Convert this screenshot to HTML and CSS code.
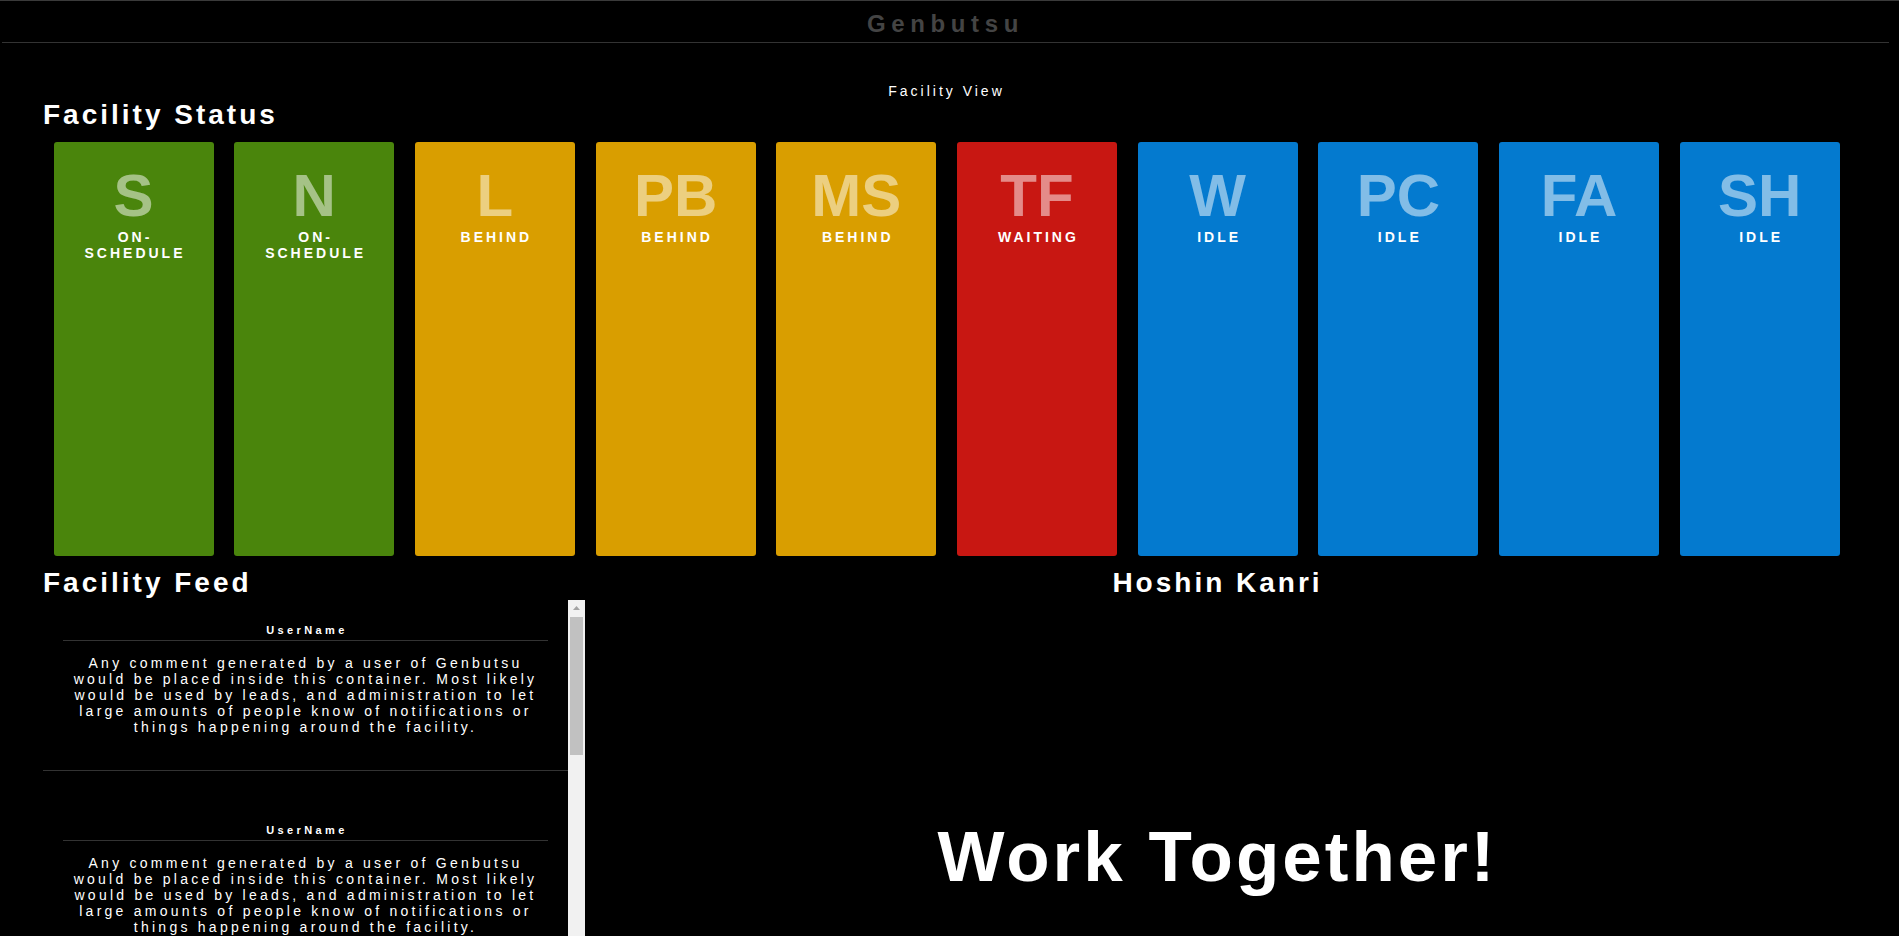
FILE: index.html
```html
<!DOCTYPE html>
<html lang="en">
<head>
<meta charset="utf-8">
<title>Genbutsu</title>
<link rel="stylesheet" href="styles.css">
</head>
<body>
<div class="page">
  <header class="topbar">
    <h1 class="brand">Genbutsu</h1>
  </header>
  <main class="content">
    <p class="view-label">Facility View</p>
    <h2 class="section-title">Facility Status</h2>
    <div class="status-grid">
      <div class="card card-green"><div class="card-code">S</div><div class="card-state">On-schedule</div></div>
      <div class="card card-green"><div class="card-code">N</div><div class="card-state">On-schedule</div></div>
      <div class="card card-amber"><div class="card-code">L</div><div class="card-state">Behind</div></div>
      <div class="card card-amber"><div class="card-code">PB</div><div class="card-state">Behind</div></div>
      <div class="card card-amber"><div class="card-code">MS</div><div class="card-state">Behind</div></div>
      <div class="card card-red"><div class="card-code">TF</div><div class="card-state">Waiting</div></div>
      <div class="card card-blue"><div class="card-code">W</div><div class="card-state">Idle</div></div>
      <div class="card card-blue"><div class="card-code">PC</div><div class="card-state">Idle</div></div>
      <div class="card card-blue"><div class="card-code">FA</div><div class="card-state">Idle</div></div>
      <div class="card card-blue"><div class="card-code">SH</div><div class="card-state">Idle</div></div>
    </div>
    <div class="lower">
      <section class="feed-col">
        <h2 class="section-title">Facility Feed</h2>
        <div class="feed">
          <div class="feed-list">
            <article class="post">
              <h4 class="post-user">UserName</h4>
              <p class="post-text">Any comment generated by a user of Genbutsu<br>would be placed inside this container. Most likely<br>would be used by leads, and administration to let<br>large amounts of people know of notifications or<br>things happening around the facility.</p>
            </article>
            <article class="post">
              <h4 class="post-user">UserName</h4>
              <p class="post-text">Any comment generated by a user of Genbutsu<br>would be placed inside this container. Most likely<br>would be used by leads, and administration to let<br>large amounts of people know of notifications or<br>things happening around the facility.</p>
            </article>
            <article class="post">
              <h4 class="post-user">UserName</h4>
              <p class="post-text">Any comment generated by a user of Genbutsu<br>would be placed inside this container. Most likely<br>would be used by leads, and administration to let<br>large amounts of people know of notifications or<br>things happening around the facility.</p>
            </article>
          </div>
          <div class="scrollbar" aria-hidden="true">
            <div class="scroll-btn">
              <svg width="7" height="4" viewBox="0 0 7 4"><path d="M0 4 L3.5 0 L7 4 Z" fill="#a3a3a3"/></svg>
            </div>
            <div class="scroll-thumb"></div>
          </div>
        </div>
      </section>
      <section class="hoshin-col">
        <h2 class="section-title">Hoshin Kanri</h2>
        <p class="motto">Work Together!</p>
      </section>
    </div>
  </main>
</div>
</body>
</html>
```
FILE: styles.css
```css
html, body {
  margin: 0;
  padding: 0;
  background: #000;
  overflow: hidden;
  height: 100%;
}

body {
  font-family: "Liberation Sans", Arial, sans-serif;
  color: #fff;
}

.page {
  width: 1899px;
}

.topbar {
  border-top: 1px solid #3a3a3a;
}

.brand {
  margin: 0 10px 0 2px;
  padding: 9px 0 4px;
  border-bottom: 1px solid #333;
  font-size: 24px;
  line-height: 28px;
  font-weight: bold;
  letter-spacing: 5.6px;
  color: #444;
  text-align: center;
}

.content {
  padding: 0 43px;
}

.view-label {
  margin: 40px 0 0;
  font-size: 14px;
  line-height: 16px;
  letter-spacing: 3px;
  text-align: center;
  padding-right: 6px;
}

.section-title {
  margin: 0 0 11px;
  font-size: 28px;
  line-height: 32px;
  font-weight: bold;
  letter-spacing: 3px;
}

.status-grid {
  display: grid;
  grid-template-columns: repeat(10, 160px);
  column-gap: 20.7px;
  margin-left: 10.5px;
}

.card {
  height: 414px;
  box-sizing: border-box;
  padding: 21px 15px 0;
  border-radius: 3px;
  text-align: center;
}

.card-green { background: #4a850c; }
.card-amber { background: #d99e00; }
.card-red { background: #c81712; }
.card-blue { background: #047acf; }

.card-code {
  font-size: 60px;
  line-height: 66px;
  font-weight: bold;
  color: rgba(255, 255, 255, 0.5);
}

.card-state {
  font-size: 14px;
  line-height: 16px;
  font-weight: bold;
  letter-spacing: 3px;
  text-transform: uppercase;
  padding-left: 3px;
}

.lower {
  display: flex;
}

.lower .section-title {
  margin: 11px 0 1px;
}

.feed-col {
  width: 542px;
  flex: none;
}

.feed {
  display: flex;
  height: 384px;
}

.feed-list {
  flex: 1;
  min-width: 0;
  overflow: hidden;
}

.scrollbar {
  width: 17px;
  flex: none;
  background: #f1f1f1;
}

.scroll-btn {
  height: 17px;
  display: flex;
  align-items: center;
  justify-content: center;
}

.scroll-btn svg {
  display: block;
  margin-top: -1px;
}

.scroll-thumb {
  height: 138px;
  margin: 0 2px;
  background: #c1c1c1;
}

.post {
  padding: 24px 0 21px;
  border-bottom: 1px solid #333;
  text-align: center;
}

.post + .post {
  padding-top: 53px;
}

.post-user {
  margin: 0 20px;
  padding: 0 0 3px 3px;
  border-bottom: 1px solid #333;
  font-size: 11px;
  line-height: 13px;
  font-weight: bold;
  letter-spacing: 3.4px;
}

.post-text {
  margin: 14px 10px;
  font-size: 14px;
  line-height: 16px;
  letter-spacing: 3.25px;
  white-space: nowrap;
}

.hoshin-col {
  flex: 1;
  text-align: center;
  padding-right: 6px;
}

.motto {
  margin: 218px 0 0;
  font-size: 71px;
  line-height: 80px;
  font-weight: bold;
  letter-spacing: 3px;
}
```
